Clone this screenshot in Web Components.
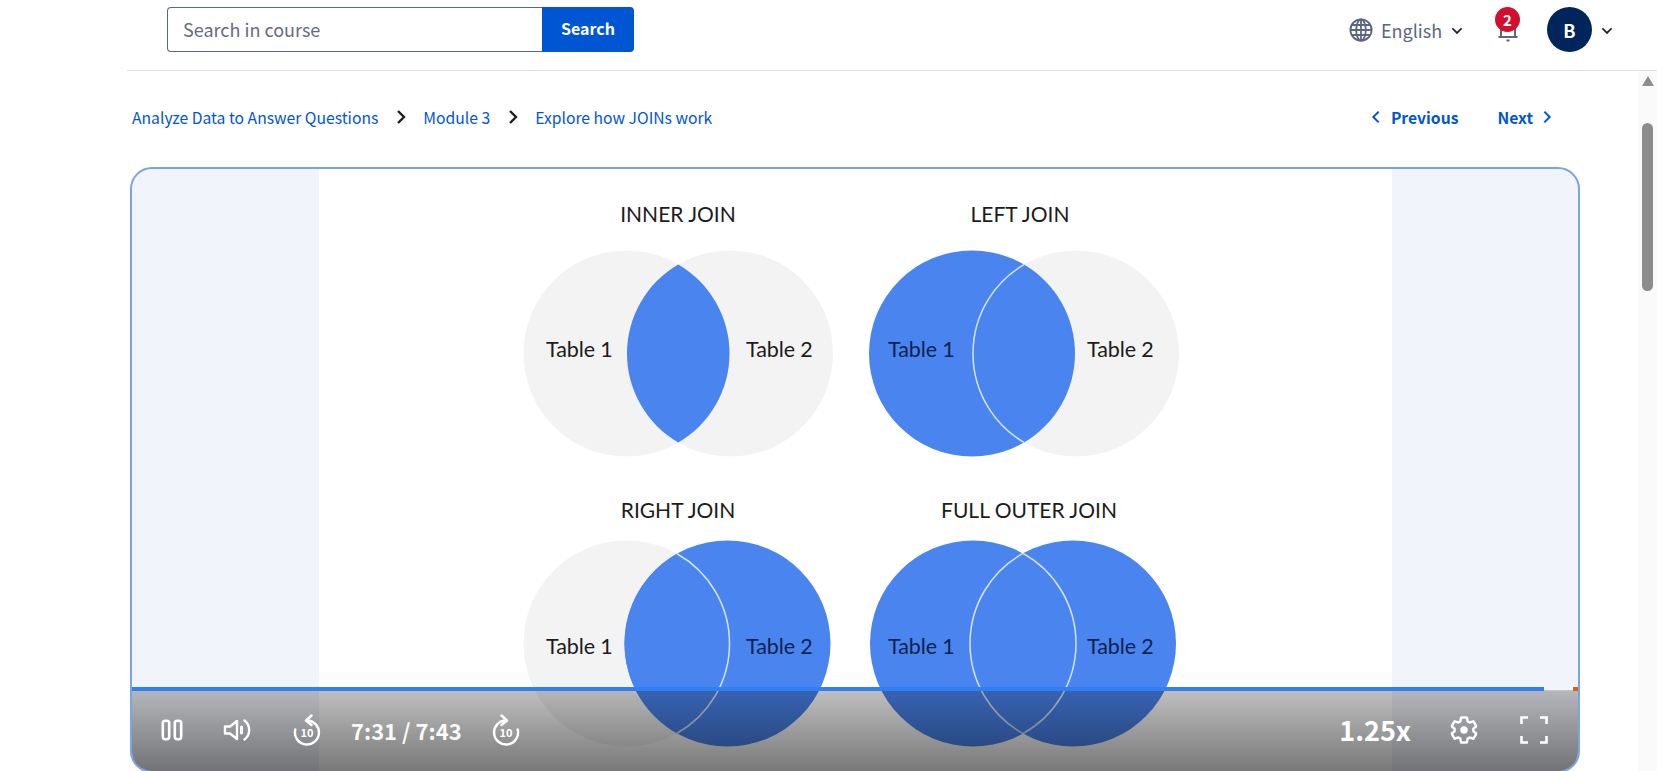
<!DOCTYPE html>
<html lang="en">
<head>
<meta charset="utf-8">
<title>Explore how JOINs work</title>
<style>
  html, body { margin: 0; padding: 0; height: 771px; overflow: hidden; background: #fff; }
  body { font-family: "Noto Sans CJK SC", "Lato", sans-serif; }
</style>
</head>
<body>
<course-page></course-page>

<script>
const CHEVRON = (dir, size, color, width) => {
  const paths = {
    down: 'M2 4.5 L6 8.5 L10 4.5',
    left: 'M8 2 L4 6 L8 10',
    right: 'M4 2 L8 6 L4 10'
  };
  return `<svg width="${size}" height="${size}" viewBox="0 0 12 12" fill="none" stroke="${color}" stroke-width="${width}"><path d="${paths[dir]}"/></svg>`;
};

class SearchBox extends HTMLElement {
  constructor() {
    super();
    this.attachShadow({ mode: 'open' });
  }
  connectedCallback() {
    this.shadowRoot.innerHTML = `
      <style>
        :host { display: flex; width: 467px; height: 45px; }
        .field {
          flex: 1;
          display: flex;
          align-items: center;
          box-sizing: border-box;
          border: 1px solid #5b6780;
          border-right: none;
          border-radius: 4px 0 0 4px;
          padding: 0 0 1px 15px;
          font-size: 18px;
          color: #636d82;
        }
        .go {
          width: 92px;
          box-sizing: border-box;
          padding-bottom: 3px;
          display: flex;
          align-items: center;
          justify-content: center;
          background: #0056d2;
          color: #fff;
          font-size: 16px;
          font-weight: 700;
          border-radius: 0 4px 4px 0;
        }
      </style>
      <div class="field">Search in course</div>
      <div class="go">Search</div>
    `;
  }
}

class TopBar extends HTMLElement {
  constructor() {
    super();
    this.attachShadow({ mode: 'open' });
  }
  connectedCallback() {
    this.shadowRoot.innerHTML = `
      <style>
        :host {
          display: flex;
          align-items: flex-start;
          box-sizing: border-box;
          height: 71px;
          margin-left: 127px;
          padding: 7px 0 0 40px;
          border-bottom: 1px solid #dfe2ec;
        }
        .tools { margin-left: auto; display: flex; align-items: center; height: 45px; padding-right: 43px; }
        .lang { display: flex; align-items: center; color: #5b6780; font-size: 18px; }
        .lang svg:first-child { margin-right: 8px; }
        .lang span { width: 69px; }
        .bell { position: relative; width: 24px; height: 45px; margin-left: 32px; }
        .bell svg { position: absolute; left: 0; top: 10px; }
        .badge {
          position: absolute;
          left: -1px;
          top: 0;
          width: 25px;
          height: 25px;
          border-radius: 50%;
          background: #d30f2f;
          color: #fff;
          font-size: 15px;
          font-weight: 700;
          display: flex;
          align-items: center;
          justify-content: center;
        }
        .avatar {
          width: 45px;
          height: 45px;
          margin-left: 27px;
          border-radius: 50%;
          background: #00255d;
          color: #fff;
          font-size: 18px;
          font-weight: 700;
          display: flex;
          align-items: center;
          justify-content: center;
        }
        .menu { margin-left: 8px; display: flex; }
      </style>
      <search-box></search-box>
      <div class="tools">
        <div class="lang">
          <svg width="24" height="24" viewBox="0 0 24 24" fill="none" stroke="#5b6780" stroke-width="1.8">
            <circle cx="12" cy="12" r="10.6"/>
            <ellipse cx="12" cy="12" rx="4.8" ry="10.6"/>
            <path d="M12 1.4 V22.6 M1.4 12 H22.6 M2.8 7 H21.2 M2.8 17 H21.2"/>
          </svg>
          <span>English</span>
          ${CHEVRON('down', 14, '#1f1f1f', 1.5)}
        </div>
        <div class="bell">
          <svg width="24" height="32" viewBox="0 0 24 32" fill="none" stroke="#5b6780" stroke-width="2">
            <path d="M5 19 V10 A7 7 0 0 1 19 10 V19"/>
            <path d="M2.5 20 H21.5"/>
            <path d="M10.5 23.5 H13.5"/>
          </svg>
          <div class="badge">2</div>
        </div>
        <div class="avatar">B</div>
        <div class="menu">${CHEVRON('down', 14, '#1f1f1f', 1.5)}</div>
      </div>
    `;
  }
}

class CrumbBar extends HTMLElement {
  constructor() {
    super();
    this.attachShadow({ mode: 'open' });
  }
  connectedCallback() {
    this.shadowRoot.innerHTML = `
      <style>
        :host {
          display: flex;
          align-items: center;
          height: 92px;
          margin-bottom: 4px;
          padding: 0 83px 0 2px;
          font-size: 15.7px;
          color: #0056d2;
        }
        .crumbs { display: flex; align-items: center; }
        .sep { display: flex; margin: 0 13.5px; }
        .pager { margin-left: auto; display: flex; align-items: center; font-weight: 700; }
        .pager span { display: flex; align-items: center; gap: 7px; }
        .pager span + span { margin-left: 39px; gap: 6px; }
      </style>
      <div class="crumbs">
        <span>Analyze Data to Answer Questions</span>
        <span class="sep">${CHEVRON('right', 18, '#1f1f1f', 1.6)}</span>
        <span>Module 3</span>
        <span class="sep">${CHEVRON('right', 18, '#1f1f1f', 1.6)}</span>
        <span>Explore how JOINs work</span>
      </div>
      <div class="pager">
        <span>${CHEVRON('left', 16, '#0056d2', 1.5)}Previous</span>
        <span>Next${CHEVRON('right', 16, '#0056d2', 1.5)}</span>
      </div>
    `;
  }
}

// coordinates below are slide pixels, origin at the white slide's top left
const BLUE = '#4a84ee';
const GREY = '#f3f3f3';
const JOINS = [
  { title: 'INNER JOIN', tx: 359, ty: 53, cy: 184.5, ly: 188, a: 307.5, b: 411, r: 103, fa: false, fb: false, lbl: [227, 427] },
  { title: 'LEFT JOIN', tx: 701, ty: 53, cy: 184.5, ly: 188, a: 653, b: 757, r: 103, fa: true, fb: false, lbl: [569, 768] },
  { title: 'RIGHT JOIN', tx: 359, ty: 349, cy: 474.5, ly: 484.5, a: 307.5, b: 408.5, r: 103, fa: false, fb: true, lbl: [227, 427] },
  { title: 'FULL OUTER JOIN', tx: 710, ty: 349, cy: 474.5, ly: 484.5, a: 654, b: 754, r: 103, fa: true, fb: true, lbl: [569, 768] }
];

class JoinSlide extends HTMLElement {
  constructor() {
    super();
    this.attachShadow({ mode: 'open' });
  }
  venn(j) {
    const top = j.cy - Math.sqrt(j.r * j.r - Math.pow((j.b - j.a) / 2, 2));
    const bot = 2 * j.cy - top;
    const mid = (j.a + j.b) / 2;
    const lens = `M${mid} ${top} A${j.r} ${j.r} 0 0 1 ${mid} ${bot} A${j.r} ${j.r} 0 0 1 ${mid} ${top}Z`;
    let out = `<circle cx="${j.a}" cy="${j.cy}" r="${j.r}" fill="${j.fa ? BLUE : GREY}"/>`;
    out += `<circle cx="${j.b}" cy="${j.cy}" r="${j.r}" fill="${j.fb ? BLUE : GREY}"/>`;
    out += `<path d="${lens}" fill="${BLUE}"/>`;
    if (j.fa) out += `<path d="M${mid} ${top} A${j.r} ${j.r} 0 0 0 ${mid} ${bot}" fill="none" stroke="#d5e3fb" stroke-width="1.5"/>`;
    if (j.fb) out += `<path d="M${mid} ${top} A${j.r} ${j.r} 0 0 1 ${mid} ${bot}" fill="none" stroke="#d5e3fb" stroke-width="1.5"/>`;
    out += `<text class="title" x="${j.tx}" y="${j.ty}" text-anchor="middle">${j.title}</text>`;
    out += `<text class="lbl" x="${j.lbl[0]}" y="${j.ly}" fill="${j.fa ? '#0f2350' : '#1c1c1c'}">Table 1</text>`;
    out += `<text class="lbl" x="${j.lbl[1]}" y="${j.ly}" fill="${j.fb ? '#0f2350' : '#1c1c1c'}">Table 2</text>`;
    return out;
  }
  connectedCallback() {
    this.shadowRoot.innerHTML = `
      <style>
        :host { display: block; width: 1073px; height: 604px; background: #fff; }
        svg { display: block; }
        text { font-family: "Lato", "Open Sans", sans-serif; }
        .title { font-size: 21px; fill: #1c1c1c; }
        .lbl { font-size: 21.5px; letter-spacing: -.1px; }
      </style>
      <svg width="1073" height="604" viewBox="0 0 1073 604">${JOINS.map(j => this.venn(j)).join('')}</svg>
    `;
  }
}

class PlayerControls extends HTMLElement {
  constructor() {
    super();
    this.attachShadow({ mode: 'open' });
  }
  connectedCallback() {
    this.shadowRoot.innerHTML = `
      <style>
        :host {
          position: absolute;
          left: 0;
          right: 0;
          bottom: 0;
          display: block;
          color: #fff;
        }
        .track {
          position: absolute;
          left: 0;
          right: 0;
          top: -3px;
          height: 4px;
          display: flex;
          background: linear-gradient(transparent 3px, #c4c4c4 3px);
        }
        .played { width: 1412px; background: #2f80f5; }
        .end { width: 5px; margin-left: auto; background: #e0600f; }
        .bar {
          height: 81px;
          display: flex;
          align-items: center;
          box-sizing: border-box;
          padding: 0 30px 2px 29px;
          background: linear-gradient(rgba(0,0,0,.25), rgba(0,0,0,.53));
        }
        .bar svg { display: block; flex: none; }
        .time { margin-left: 30px; font-size: 22px; font-weight: 700; white-space: nowrap; opacity: .95; }
        .speed { margin-left: auto; font-size: 27px; font-weight: 700; }
        svg text { font-family: "Noto Sans CJK SC", sans-serif; font-size: 11px; font-weight: 700; fill: #fff; }
      </style>
      <div class="track"><div class="played"></div><div class="end"></div></div>
      <div class="bar">
        <svg width="22" height="22" viewBox="0 0 22 22" fill="none" stroke="#fff" stroke-width="2.6">
          <rect x="1.8" y="1.8" width="6.4" height="18.4" rx="2.4"/>
          <rect x="13.8" y="1.8" width="6.4" height="18.4" rx="2.4"/>
        </svg>
        <svg style="margin-left:40px" width="28" height="26" viewBox="0 0 28 26" fill="none" stroke="#fff" stroke-width="2.4" stroke-linejoin="round" stroke-linecap="round">
          <path d="M2 9.5 H7 L14 4 V22 L7 16.5 H2 Z"/>
          <path d="M18.5 10 V16" stroke-width="3"/>
          <path d="M21.5 3.5 A12 12 0 0 1 21.5 22.5"/>
        </svg>
        <svg style="margin-left:42px" width="28" height="32" viewBox="0 0 28 32" fill="none" stroke="#fff" stroke-width="2.4" stroke-linecap="round" stroke-linejoin="round">
          <path d="M14 6.5 A12 12 0 1 1 2.3 15.5"/>
          <path d="M18.5 1.5 L13 6.5 L18.5 11"/>
          <text x="14" y="23" text-anchor="middle" stroke="none">10</text>
        </svg>
        <div class="time">7:31 / 7:43</div>
        <svg style="margin-left:30px" width="28" height="32" viewBox="0 0 28 32" fill="none" stroke="#fff" stroke-width="2.4" stroke-linecap="round" stroke-linejoin="round">
          <path d="M14 6.5 A12 12 0 1 0 25.7 15.5"/>
          <path d="M9.5 1.5 L15 6.5 L9.5 11"/>
          <text x="14" y="23" text-anchor="middle" stroke="none">10</text>
        </svg>
        <div class="speed">1.25x</div>
        <svg style="margin-left:38px" width="30" height="30" viewBox="0 0 24 24" fill="none" stroke="#fff" stroke-width="1.9" stroke-linejoin="round">
          <path d="M19.43 12.98c.04-.32.07-.64.07-.98s-.03-.66-.07-.98l2.11-1.65c.19-.15.24-.42.12-.64l-2-3.46c-.12-.22-.39-.3-.61-.22l-2.49 1c-.52-.4-1.08-.73-1.69-.98l-.38-2.65C14.46 2.18 14.25 2 14 2h-4c-.25 0-.46.18-.49.42l-.38 2.65c-.61.25-1.17.59-1.69.98l-2.49-1c-.23-.09-.49 0-.61.22l-2 3.46c-.13.22-.07.49.12.64l2.11 1.65c-.04.32-.07.65-.07.98s.03.66.07.98l-2.11 1.65c-.19.15-.24.42-.12.64l2 3.46c.12.22.39.3.61.22l2.49-1c.52.4 1.08.73 1.69.98l.38 2.65c.03.24.24.42.49.42h4c.25 0 .46-.18.49-.42l.38-2.65c.61-.25 1.17-.59 1.69-.98l2.49 1c.23.09.49 0 .61-.22l2-3.46c.12-.22.07-.49-.12-.64l-2.11-1.65z"/>
          <circle cx="12" cy="12" r="3" fill="#fff" stroke="none"/>
        </svg>
        <svg style="margin-left:41px" width="28" height="28" viewBox="0 0 28 28" fill="none" stroke="#fff" stroke-width="2.6">
          <path d="M1.5 8 V1.5 H8 M20 1.5 H26.5 V8 M26.5 20 V26.5 H20 M8 26.5 H1.5 V20"/>
        </svg>
      </div>
    `;
  }
}

class VideoPlayer extends HTMLElement {
  constructor() {
    super();
    this.attachShadow({ mode: 'open' });
  }
  connectedCallback() {
    this.shadowRoot.innerHTML = `
      <style>
        :host {
          display: block;
          position: relative;
          box-sizing: border-box;
          width: 1450px;
          height: 606px;
          border: 2px solid #7ba4e6;
          border-radius: 22px;
          overflow: hidden;
          background: #f1f4fa;
        }
        .stage { display: flex; justify-content: center; margin-left: 1px; }
      </style>
      <div class="stage"><join-slide></join-slide></div>
      <player-controls></player-controls>
    `;
  }
}

class FakeScrollbar extends HTMLElement {
  constructor() {
    super();
    this.attachShadow({ mode: 'open' });
  }
  connectedCallback() {
    this.shadowRoot.innerHTML = `
      <style>
        :host {
          display: flex;
          flex-direction: column;
          align-items: center;
          width: 19px;
          background: #fafafa;
        }
        .up {
          width: 0;
          height: 0;
          margin-top: 5px;
          border-left: 6px solid transparent;
          border-right: 6px solid transparent;
          border-bottom: 10px solid #8c8c8c;
        }
        .thumb {
          width: 11px;
          height: 168px;
          margin-top: 37px;
          border-radius: 6px;
          background: #8c8c8c;
        }
      </style>
      <div class="up"></div>
      <div class="thumb"></div>
    `;
  }
}

class CoursePage extends HTMLElement {
  constructor() {
    super();
    this.attachShadow({ mode: 'open' });
  }
  connectedCallback() {
    this.shadowRoot.innerHTML = `
      <style>
        :host { display: flex; flex-direction: column; height: 771px; overflow: hidden; }
        .main { flex: 1; display: flex; min-height: 0; }
        .content { flex: 1; min-width: 0; padding-left: 130px; }
      </style>
      <top-bar></top-bar>
      <div class="main">
        <div class="content">
          <crumb-bar></crumb-bar>
          <video-player></video-player>
        </div>
        <fake-scrollbar></fake-scrollbar>
      </div>
    `;
  }
}

customElements.define('search-box', SearchBox);
customElements.define('top-bar', TopBar);
customElements.define('crumb-bar', CrumbBar);
customElements.define('join-slide', JoinSlide);
customElements.define('player-controls', PlayerControls);
customElements.define('video-player', VideoPlayer);
customElements.define('fake-scrollbar', FakeScrollbar);
customElements.define('course-page', CoursePage);
</script>
</body>
</html>
